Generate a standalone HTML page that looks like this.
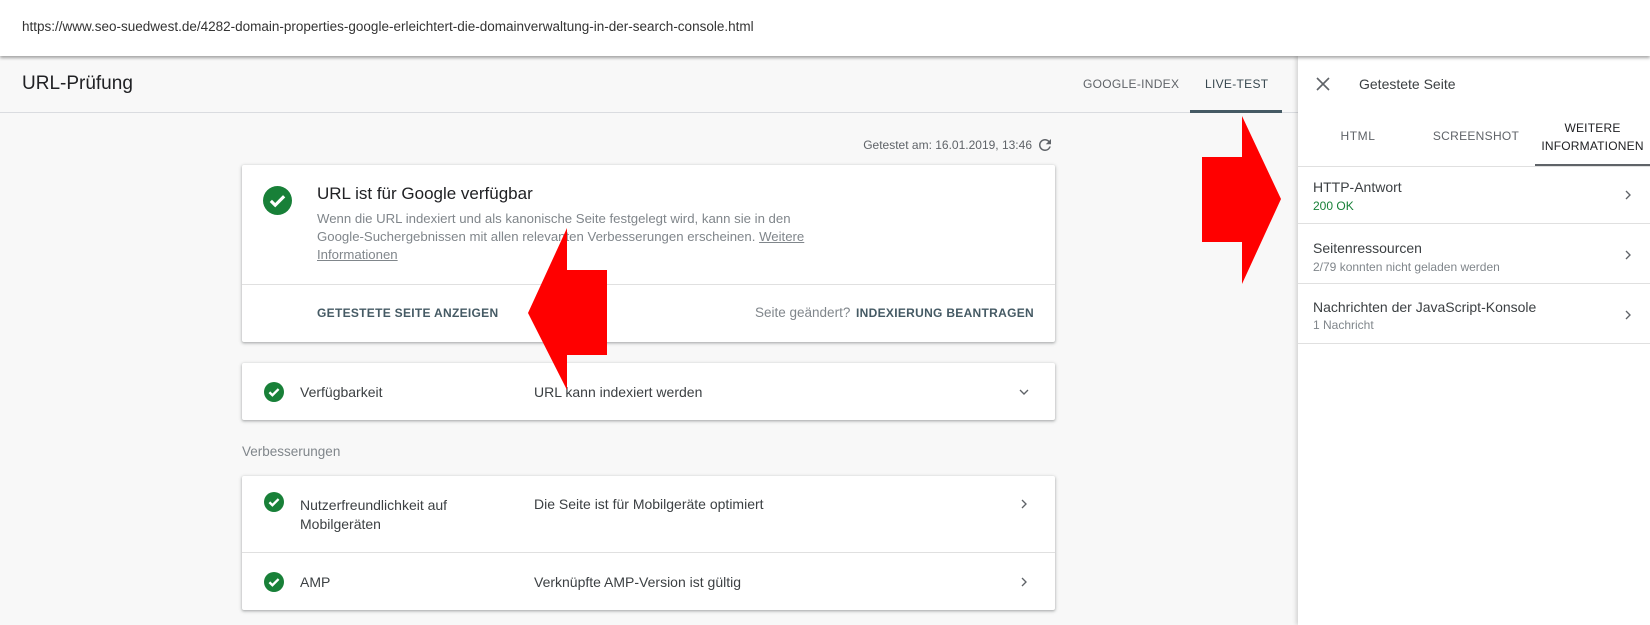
<!DOCTYPE html>
<html><head><meta charset="utf-8">
<style>
*{margin:0;padding:0;box-sizing:border-box}
body{width:1650px;height:625px;overflow:hidden;background:#f8f8f8;font-family:"Liberation Sans",Arial,sans-serif;position:relative;color:#202124}
.a{position:absolute;white-space:nowrap}
.card{position:absolute;background:#fff;box-shadow:0 1px 2px rgba(60,64,67,.3),0 1px 3px 1px rgba(60,64,67,.15);border-radius:2px}
.cap{font-size:12px;font-weight:bold;letter-spacing:.3px;color:#455a64}
</style></head><body>
<div class="a" style="left:0;top:0;width:1650px;height:56px;background:#fff;box-shadow:0 2px 3px rgba(0,0,0,.35);z-index:3"></div>
<div class="a" style="left:22px;top:19px;font-size:13.5px;color:#333;z-index:4">https://www.seo-suedwest.de/4282-domain-properties-google-erleichtert-die-domainverwaltung-in-der-search-console.html</div>

<div class="a" style="left:0;top:112px;width:1298px;height:1px;background:#dadce0"></div>
<div class="a" style="left:22px;top:73px;font-size:19px;color:#202124">URL-Prüfung</div>
<div class="a" style="left:1083px;top:77px;font-size:12px;letter-spacing:.3px;color:#5f6368">GOOGLE-INDEX</div>
<div class="a" style="left:1205px;top:77px;font-size:12px;letter-spacing:.3px;color:#37474f">LIVE-TEST</div>
<div class="a" style="left:1190px;top:110px;width:92px;height:3px;background:#455a64"></div>

<div class="a" style="right:618px;top:138px;font-size:12px;color:#5f6368">Getestet am: 16.01.2019, 13:46</div>
<svg class="a" style="left:1036px;top:136px" width="18" height="18" viewBox="0 0 24 24"><path fill="#5f6368" d="M17.65 6.35A7.958 7.958 0 0 0 12 4c-4.42 0-7.99 3.58-7.99 8s3.570 8 7.99 8c3.73 0 6.84-2.55 7.73-6h-2.08A5.99 5.99 0 0 1 12 18c-3.31 0-6-2.69-6-6s2.69-6 6-6c1.66 0 3.14.69 4.22 1.78L13 11h7V4l-2.35 2.35z"/></svg>

<div class="card" style="left:242px;top:165px;width:813px;height:177px">
  <div class="a" style="left:0;top:119px;width:813px;height:1px;background:#e0e0e0"></div>
</div>
<svg class="a" style="left:263px;top:186px" width="29" height="29" viewBox="0 0 24 24"><circle cx="12" cy="12" r="12" fill="#188038"/><path d="M6.5 12.3l3.6 3.6 7.4-7.4" stroke="#fff" stroke-width="2.6" fill="none"/></svg>
<div class="a" style="left:317px;top:184px;font-size:17px;color:#202124">URL ist für Google verfügbar</div>
<div class="a" style="left:317px;top:210px;font-size:13.2px;line-height:18px;color:#80868b">Wenn die URL indexiert und als kanonische Seite festgelegt wird, kann sie in den<br>Google-Suchergebnissen mit allen relevanten Verbesserungen erscheinen. <u>Weitere</u><br><u>Informationen</u></div>
<div class="a cap" style="left:317px;top:306px">GETESTETE SEITE ANZEIGEN</div>
<div class="a" style="left:755px;top:305px;font-size:13.5px;color:#80868b">Seite geändert?</div>
<div class="a cap" style="right:616px;top:306px">INDEXIERUNG BEANTRAGEN</div>

<div class="card" style="left:242px;top:363px;width:813px;height:57px"></div>
<svg class="a" style="left:264px;top:382px" width="20" height="20" viewBox="0 0 24 24"><circle cx="12" cy="12" r="12" fill="#188038"/><path d="M6.5 12.3l3.6 3.6 7.4-7.4" stroke="#fff" stroke-width="2.8" fill="none"/></svg>
<div class="a" style="left:300px;top:384px;font-size:14px;color:#3c4043">Verfügbarkeit</div>
<div class="a" style="left:534px;top:384px;font-size:14px;color:#3c4043">URL kann indexiert werden</div>
<svg class="a" style="left:1016px;top:384px" width="16" height="16" viewBox="0 0 24 24"><path d="M6 9l6 6 6-6" stroke="#5f6368" stroke-width="2" fill="none"/></svg>

<div class="a" style="left:242px;top:444px;font-size:13.5px;color:#80868b">Verbesserungen</div>

<div class="card" style="left:242px;top:476px;width:813px;height:134px">
  <div class="a" style="left:0;top:76px;width:813px;height:1px;background:#e0e0e0"></div>
</div>
<svg class="a" style="left:264px;top:492px" width="20" height="20" viewBox="0 0 24 24"><circle cx="12" cy="12" r="12" fill="#188038"/><path d="M6.5 12.3l3.6 3.6 7.4-7.4" stroke="#fff" stroke-width="2.8" fill="none"/></svg>
<div class="a" style="left:300px;top:496px;font-size:14px;line-height:19px;color:#3c4043">Nutzerfreundlichkeit auf<br>Mobilgeräten</div>
<div class="a" style="left:534px;top:496px;font-size:14px;color:#3c4043">Die Seite ist für Mobilgeräte optimiert</div>
<svg class="a" style="left:1016px;top:496px" width="16" height="16" viewBox="0 0 24 24"><path d="M9 6l6 6-6 6" stroke="#5f6368" stroke-width="2" fill="none"/></svg>
<svg class="a" style="left:264px;top:572px" width="20" height="20" viewBox="0 0 24 24"><circle cx="12" cy="12" r="12" fill="#188038"/><path d="M6.5 12.3l3.6 3.6 7.4-7.4" stroke="#fff" stroke-width="2.8" fill="none"/></svg>
<div class="a" style="left:300px;top:574px;font-size:14px;color:#3c4043">AMP</div>
<div class="a" style="left:534px;top:574px;font-size:14px;color:#3c4043">Verknüpfte AMP-Version ist gültig</div>
<svg class="a" style="left:1016px;top:574px" width="16" height="16" viewBox="0 0 24 24"><path d="M9 6l6 6-6 6" stroke="#5f6368" stroke-width="2" fill="none"/></svg>

<!-- side panel -->
<div class="a" style="left:1298px;top:56px;width:352px;height:569px;background:#fff;box-shadow:-2px 0 4px rgba(0,0,0,.15);z-index:2">
  <svg class="a" style="left:17px;top:20px" width="16" height="16" viewBox="0 0 16 16"><path d="M2 2l12 12M14 2L2 14" stroke="#5f6368" stroke-width="1.6"/></svg>
  <div class="a" style="left:61px;top:20px;font-size:14px;color:#3c4043">Getestete Seite</div>
  <div class="a" style="left:0;top:73px;width:120px;text-align:center;font-size:12px;letter-spacing:.6px;color:#5f6368">HTML</div>
  <div class="a" style="left:118px;top:73px;width:120px;text-align:center;font-size:12px;letter-spacing:.3px;color:#5f6368">SCREENSHOT</div>
  <div class="a" style="left:237px;top:63px;width:115px;text-align:center;font-size:12px;line-height:18px;letter-spacing:.2px;color:#202124">WEITERE<br>INFORMATIONEN</div>
  <div class="a" style="left:237px;top:108px;width:115px;height:3px;background:#5f6368"></div>
  <div class="a" style="left:0;top:110px;width:352px;height:1px;background:#e0e0e0"></div>

  <div class="a" style="left:15px;top:123px;font-size:14px;color:#3c4043">HTTP-Antwort</div>
  <div class="a" style="left:15px;top:143px;font-size:12px;color:#188038">200 OK</div>
  <div class="a" style="left:0;top:167px;width:352px;height:1px;background:#e0e0e0"></div>
  <div class="a" style="left:15px;top:184px;font-size:14px;color:#3c4043">Seitenressourcen</div>
  <div class="a" style="left:15px;top:204px;font-size:12px;color:#80868b">2/79 konnten nicht geladen werden</div>
  <div class="a" style="left:0;top:227px;width:352px;height:1px;background:#e0e0e0"></div>
  <div class="a" style="left:15px;top:243px;font-size:14px;color:#3c4043">Nachrichten der JavaScript-Konsole</div>
  <div class="a" style="left:15px;top:262px;font-size:12px;color:#80868b">1 Nachricht</div>
  <div class="a" style="left:0;top:287px;width:352px;height:1px;background:#e0e0e0"></div>
  <svg class="a" style="left:322px;top:131px" width="16" height="16" viewBox="0 0 24 24"><path d="M9 6l6 6-6 6" stroke="#5f6368" stroke-width="2" fill="none"/></svg>
  <svg class="a" style="left:322px;top:191px" width="16" height="16" viewBox="0 0 24 24"><path d="M9 6l6 6-6 6" stroke="#5f6368" stroke-width="2" fill="none"/></svg>
  <svg class="a" style="left:322px;top:251px" width="16" height="16" viewBox="0 0 24 24"><path d="M9 6l6 6-6 6" stroke="#5f6368" stroke-width="2" fill="none"/></svg>
</div>

<!-- red arrows -->
<svg class="a" style="left:0;top:0;z-index:5" width="1650" height="625">
  <polygon fill="#ff0000" points="528,313 567,228 567,270 607,270 607,355 567,355 567,390"/>
  <polygon fill="#ff0000" points="1202,157 1242,157 1242,116 1281,199 1242,284 1242,242 1202,242"/>
</svg>
</body></html>
